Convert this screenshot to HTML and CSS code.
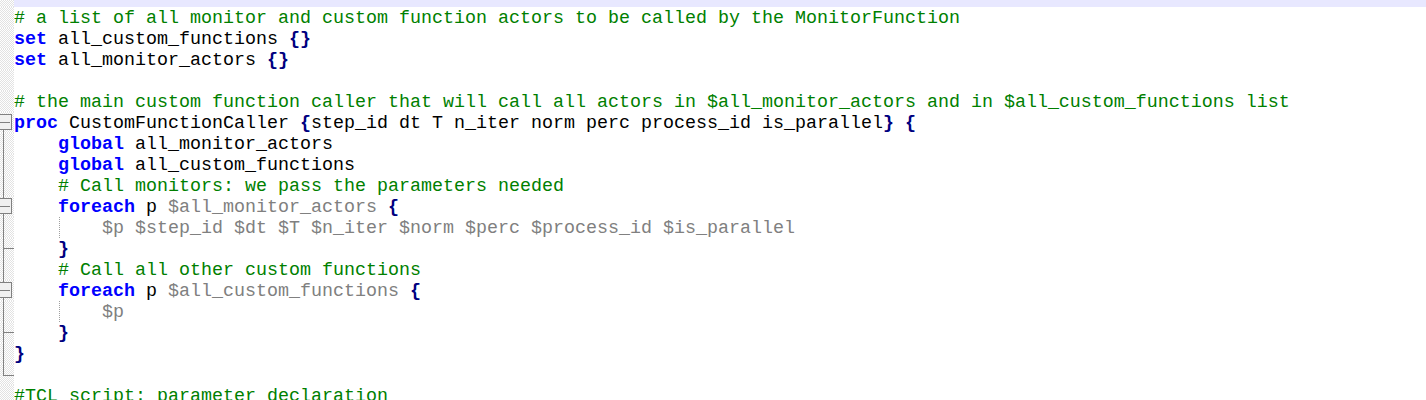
FILE: index.html
```html
<!DOCTYPE html>
<html>
<head>
<meta charset="utf-8">
<link rel="stylesheet" href="styles.css">
</head>
<body>
<div class="editor">
  <div class="row top"><div class="margin"></div><div class="code caret"></div></div>
  <div class="row"><div class="margin"></div><div class="code"><span class="cm"># a list of all monitor and custom function actors to be called by the MonitorFunction</span></div></div>
  <div class="row"><div class="margin"></div><div class="code"><span class="kw">set</span> all_custom_functions <span class="br">{}</span></div></div>
  <div class="row"><div class="margin"></div><div class="code"><span class="kw">set</span> all_monitor_actors <span class="br">{}</span></div></div>
  <div class="row"><div class="margin"></div><div class="code"></div></div>
  <div class="row"><div class="margin"></div><div class="code"><span class="cm"># the main custom function caller that will call all actors in $all_monitor_actors and in $all_custom_functions list</span></div></div>
  <div class="row"><div class="margin"><span class="fold-box first"></span></div><div class="code"><span class="kw">proc</span> CustomFunctionCaller <span class="br">{</span>step_id dt T n_iter norm perc process_id is_parallel<span class="br">}</span> <span class="br">{</span></div></div>
  <div class="row"><div class="margin"><span class="vline"></span></div><div class="code">    <span class="kw">global</span> all_monitor_actors</div></div>
  <div class="row"><div class="margin"><span class="vline"></span></div><div class="code">    <span class="kw">global</span> all_custom_functions</div></div>
  <div class="row"><div class="margin"><span class="vline"></span></div><div class="code">    <span class="cm"># Call monitors: we pass the parameters needed</span></div></div>
  <div class="row"><div class="margin"><span class="vline"></span><span class="fold-box"></span></div><div class="code">    <span class="kw">foreach</span> p <span class="var">$all_monitor_actors</span> <span class="br">{</span></div></div>
  <div class="row"><div class="margin"><span class="vline"></span></div><div class="code guide">        <span class="var">$p $step_id $dt $T $n_iter $norm $perc $process_id $is_parallel</span></div></div>
  <div class="row"><div class="margin"><span class="vline"></span><span class="tick"></span></div><div class="code">    <span class="br">}</span></div></div>
  <div class="row"><div class="margin"><span class="vline"></span></div><div class="code">    <span class="cm"># Call all other custom functions</span></div></div>
  <div class="row"><div class="margin"><span class="vline"></span><span class="fold-box"></span></div><div class="code">    <span class="kw">foreach</span> p <span class="var">$all_custom_functions</span> <span class="br">{</span></div></div>
  <div class="row"><div class="margin"><span class="vline"></span></div><div class="code guide">        <span class="var">$p</span></div></div>
  <div class="row"><div class="margin"><span class="vline"></span><span class="tick"></span></div><div class="code">    <span class="br">}</span></div></div>
  <div class="row"><div class="margin"><span class="vline"></span></div><div class="code"><span class="br">}</span></div></div>
  <div class="row"><div class="margin"><span class="vline end"></span><span class="tick end"></span></div><div class="code"></div></div>
  <div class="row"><div class="margin"></div><div class="code"><span class="cm">#TCL script: parameter declaration</span></div></div>
</div>
</body>
</html>
```

FILE: styles.css
```css
html, body {
  margin: 0;
  padding: 0;
  background: #ffffff;
  overflow: hidden;
  height: 400px;
}

.editor {
  display: flex;
  flex-direction: column;
  font-family: "Liberation Mono", "Courier New", monospace;
  font-size: 18.33px;
  line-height: 21px;
  color: #000000;
}

.row {
  display: grid;
  grid-template-columns: 14px 1fr;
  height: 21px;
}

.row.top {
  height: 7px;
}

.margin {
  position: relative;
  background: repeating-conic-gradient(#e2e2e2 0 25%, #ffffff 0 50%) 0 0 / 2px 2px;
}

.code {
  white-space: pre;
  line-height: 24px;
  height: 21px;
}

.code.caret {
  background: #e8e8ff;
  height: 7px;
}

.code.guide {
  background: linear-gradient(#a0a0a0 50%, transparent 50%) 45px 0 / 1px 2px repeat-y;
}

.cm { color: #008000; }
.kw { color: #0000ff; font-weight: bold; }
.br { color: #000080; font-weight: bold; }
.var { color: #808080; }

.vline {
  position: absolute;
  left: 3px;
  top: 0;
  bottom: 0;
  width: 1px;
  background: #808080;
}

.vline.end {
  bottom: auto;
  height: 12px;
}

.tick {
  position: absolute;
  left: 3px;
  top: 10px;
  width: 11px;
  height: 1px;
  background: #808080;
}

.tick.end {
  top: 11px;
}

.fold-box {
  position: absolute;
  left: -1px;
  top: 2px;
  width: 11px;
  height: 14px;
  border: 1px solid #808080;
  background: #f0f0f0;
}

.fold-box::after {
  content: "";
  position: absolute;
  left: 0;
  right: 1px;
  top: 7px;
  height: 1px;
  background: #808080;
}

.fold-box.first::before {
  content: "";
  position: absolute;
  left: 3px;
  top: 15px;
  width: 1px;
  height: 4px;
  background: #808080;
}
```
